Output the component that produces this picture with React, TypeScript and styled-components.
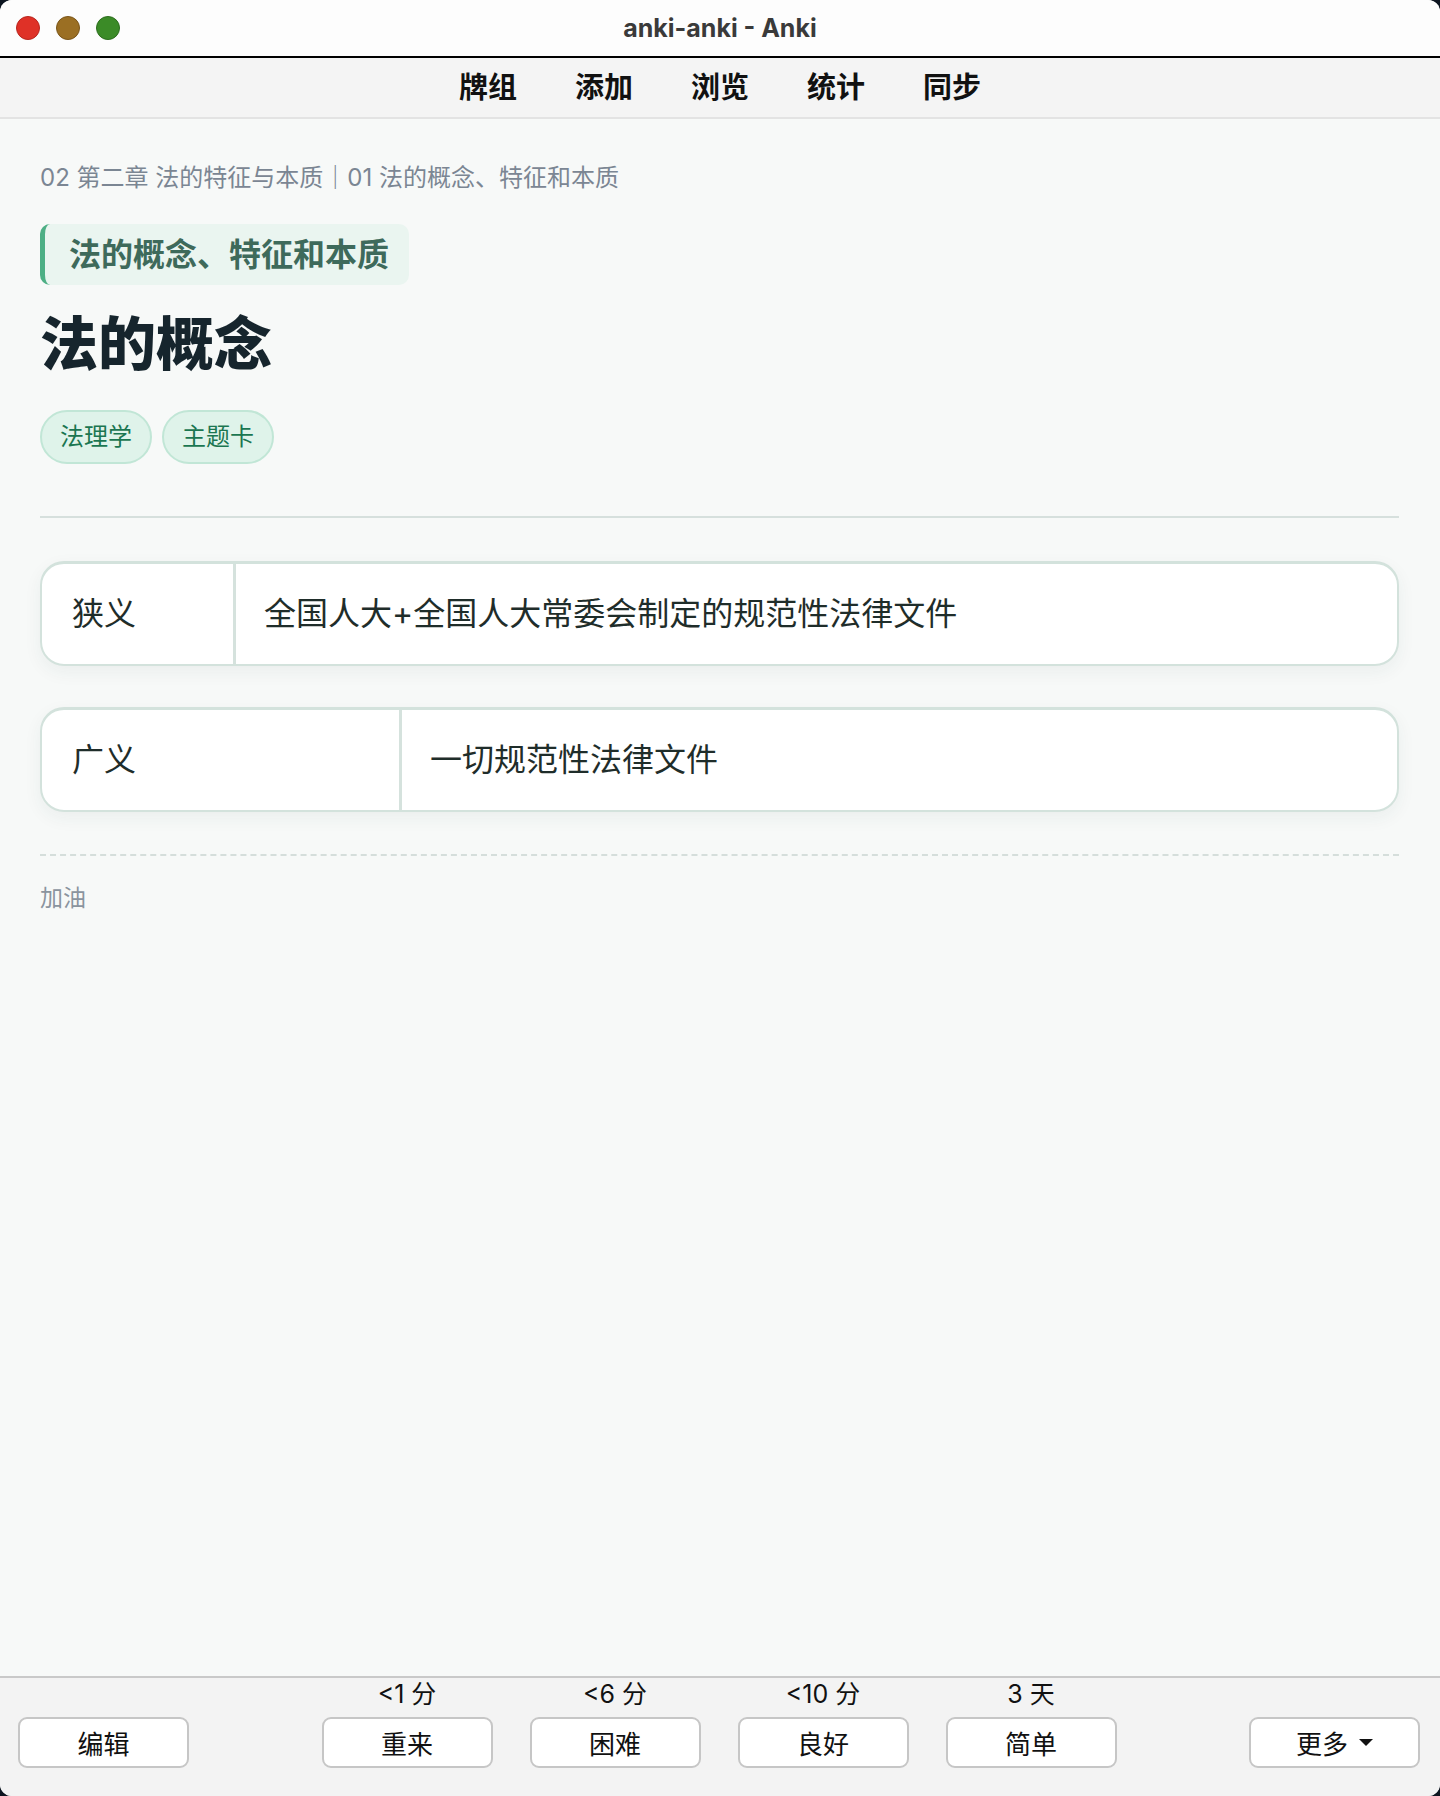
import React from "react";
import styled, { createGlobalStyle } from "styled-components";

const Global = createGlobalStyle`
  html, body { margin: 0; padding: 0; background: #0d1520; }
  body { font-family: Inter, "Noto Sans CJK SC", sans-serif; }
  #root { height: 100vh; }
  * { box-sizing: border-box; }
`;

const Window = styled.div`
  height: 100vh;
  display: flex;
  flex-direction: column;
  border-radius: 12px;
  overflow: hidden;
  background: #f7f9f8;
`;

const TitleBar = styled.div`
  flex: none;
  height: 58px;
  display: grid;
  grid-template-columns: 1fr auto 1fr;
  align-items: center;
  background: #fdfdfd;
  border-bottom: 2px solid #000;
`;

const Lights = styled.div`
  display: flex;
  gap: 16px;
  padding-left: 16px;
`;

const Light = styled.span<{ $fill: string; $edge: string }>`
  width: 24px;
  height: 24px;
  border-radius: 50%;
  background: ${(p) => p.$fill};
  border: 1px solid ${(p) => p.$edge};
`;

const WinTitle = styled.div`
  font-family: Inter, "Liberation Sans", sans-serif;
  font-weight: 700;
  font-size: 25px;
  color: #3a3a3a;
`;

const Toolbar = styled.nav`
  flex: none;
  height: 61px;
  display: flex;
  align-items: center;
  justify-content: center;
  gap: 58px;
  background: #f4f4f4;
  border-bottom: 2px solid #e3e3e3;
`;

const NavItem = styled.span`
  font-size: 29px;
  font-weight: 700;
  color: #111;
  line-height: 1;
`;

const Content = styled.main`
  flex: 1;
  padding: 42px 41px 40px 40px;
  display: flex;
  flex-direction: column;
`;

const Breadcrumb = styled.div`
  font-size: 24px;
  line-height: 34px;
  color: #7b8693;
`;

const SectionPill = styled.div`
  align-self: flex-start;
  margin-top: 29px;
  padding: 12px 20px 12px 24px;
  background: #eaf5f0;
  border-left: 5px solid #4daf85;
  border-radius: 10px;
  font-size: 32px;
  line-height: 37px;
  font-weight: 700;
  color: #3e6a5b;
`;

const Title = styled.h1`
  margin: 24px 0 0;
  font-size: 58px;
  line-height: 70px;
  font-weight: 800;
  color: #16252d;
`;

const Tags = styled.div`
  margin-top: 31px;
  display: flex;
  gap: 10px;
`;

const Tag = styled.span`
  padding: 11px 18px;
  border: 2px solid #c1e6d6;
  background: #dff3ea;
  border-radius: 999px;
  font-size: 24px;
  line-height: 28px;
  color: #1b7651;
`;

const Rule = styled.hr`
  margin: 52px 0 0;
  border: none;
  border-top: 2px solid #d6e0dd;
`;

const Cards = styled.div`
  margin-top: 43px;
  display: flex;
  flex-direction: column;
  gap: 41px;
`;

const Card = styled.div<{ $keyWidth: number }>`
  display: grid;
  grid-template-columns: ${(p) => p.$keyWidth}px 1fr;
  background: #fff;
  border: 2px solid #d3e2dc;
  border-top-width: 3px;
  border-radius: 24px;
  overflow: hidden;
  box-shadow: 0 6px 18px rgba(40, 70, 60, 0.06);
`;

const KeyCell = styled.div`
  padding: 28px 30px;
  font-size: 32px;
  line-height: 44px;
  color: #1f2d2a;
`;

const ValueCell = styled.div`
  padding: 28px 28px;
  border-left: 3px solid #d5e2dd;
  font-size: 32px;
  line-height: 44px;
  color: #1f2d2a;
`;

const Dashed = styled.hr`
  margin: 42px 0 0;
  border: none;
  border-top: 2px dashed #d5dedb;
`;

const Note = styled.div`
  margin-top: 25px;
  font-size: 23px;
  line-height: 34px;
  color: #8a949e;
`;

const BottomBar = styled.footer`
  flex: none;
  display: flex;
  align-items: flex-end;
  justify-content: space-between;
  padding: 2px 20px 28px 18px;
  background: #f3f3f3;
  border-top: 2px solid #c9c9c9;
`;

const AnswerGroup = styled.div`
  display: flex;
  gap: 37px;
`;

const AnswerCol = styled.div`
  display: flex;
  flex-direction: column;
  align-items: center;
  gap: 9px;
`;

const Interval = styled.span`
  font-size: 25px;
  line-height: 28px;
  color: #111;
`;

const Button = styled.button`
  width: 171px;
  height: 51px;
  display: flex;
  align-items: center;
  justify-content: center;
  gap: 11px;
  background: #fff;
  border: 2px solid #c6c6c6;
  border-radius: 9px;
  font-family: Inter, "Noto Sans CJK SC", sans-serif;
  font-size: 26px;
  color: #111;
  padding: 0;
`;

const Caret = styled.span`
  width: 0;
  height: 0;
  border-left: 7px solid transparent;
  border-right: 7px solid transparent;
  border-top: 7px solid #111;
`;

const answers = [
  { interval: "<1 分", label: "重来" },
  { interval: "<6 分", label: "困难" },
  { interval: "<10 分", label: "良好" },
  { interval: "3 天", label: "简单" },
];

const rows = [
  { k: "狭义", v: "全国人大+全国人大常委会制定的规范性法律文件", w: 191 },
  { k: "广义", v: "一切规范性法律文件", w: 357 },
];

export default function App() {
  return (
    <>
      <Global />
      <Window>
        <TitleBar>
          <Lights>
            <Light $fill="#df3127" $edge="#b8261e" />
            <Light $fill="#9b6f23" $edge="#7a5519" />
            <Light $fill="#3b8b27" $edge="#2c6d1d" />
          </Lights>
          <WinTitle>anki-anki - Anki</WinTitle>
          <div />
        </TitleBar>
        <Toolbar>
          {["牌组", "添加", "浏览", "统计", "同步"].map((t) => (
            <NavItem key={t}>{t}</NavItem>
          ))}
        </Toolbar>
        <Content>
          <Breadcrumb>02 第二章 法的特征与本质｜01 法的概念、特征和本质</Breadcrumb>
          <SectionPill>法的概念、特征和本质</SectionPill>
          <Title>法的概念</Title>
          <Tags>
            <Tag>法理学</Tag>
            <Tag>主题卡</Tag>
          </Tags>
          <Rule />
          <Cards>
            {rows.map((r) => (
              <Card key={r.k} $keyWidth={r.w}>
                <KeyCell>{r.k}</KeyCell>
                <ValueCell>{r.v}</ValueCell>
              </Card>
            ))}
          </Cards>
          <Dashed />
          <Note>加油</Note>
        </Content>
        <BottomBar>
          <Button>编辑</Button>
          <AnswerGroup>
            {answers.map((a) => (
              <AnswerCol key={a.label}>
                <Interval>{a.interval}</Interval>
                <Button>{a.label}</Button>
              </AnswerCol>
            ))}
          </AnswerGroup>
          <Button>
            更多
            <Caret />
          </Button>
        </BottomBar>
      </Window>
    </>
  );
}
